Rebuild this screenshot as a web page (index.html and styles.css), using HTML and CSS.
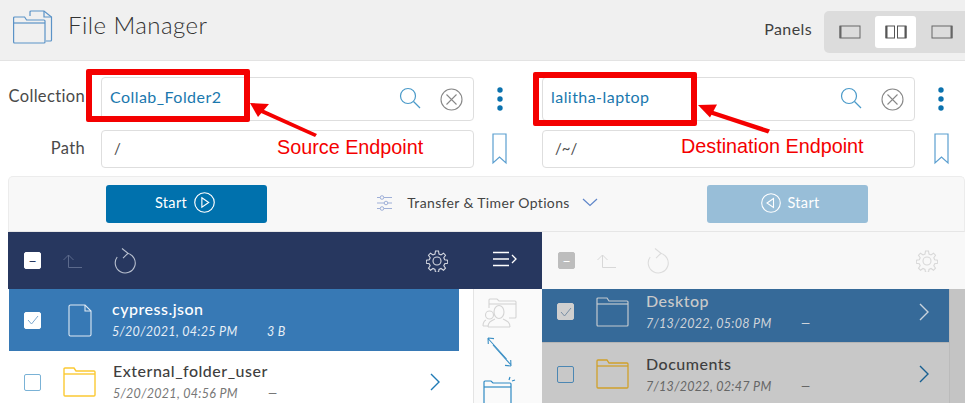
FILE: index.html
```html
<!DOCTYPE html>
<html lang="en">
<head>
    <meta charset="UTF-8">
    <title>File Manager</title>
    <link rel="stylesheet" href="styles.css">
</head>
<body>
<div class="page">
    <header class="top-bar">
        <svg class="logo" width="40" height="35" viewBox="0 0 40 35" fill="none" stroke="#5b93c7" stroke-width="1.2">
            <path d="M17 6V2a1 1 0 0 1 1-1h13l7.500 6v23a1 1 0 0 1-1 1H33"/>
            <path d="M31 1v6h7.500"/>
            <path d="M.6 32V8a1 1 0 0 1 1-1h10l2 3h17.400a1 1 0 0 1 1 1v21a1 1 0 0 1-1 1H1.600a1 1 0 0 1-1-1z"/>
            <path d="M.6 13H32"/>
        </svg>
        <h1>File Manager</h1>
        <span class="panels-label">Panels</span>
        <div class="panels-switch">
            <div class="panel-opt">
                <svg width="22" height="14" viewBox="0 0 22 14" fill="none" stroke="#666"><rect x="1" y="1" width="20" height="12"/><path d="M1.500 1v12" stroke-width="2"/></svg>
            </div>
            <div class="panel-opt active">
                <svg width="22" height="14" viewBox="0 0 22 14" fill="none" stroke="#555"><rect x="1" y="1" width="8.500" height="12"/><rect x="12.500" y="1" width="8.500" height="12"/><path d="M1.500 1v12M20.500 1v12" stroke-width="2"/></svg>
            </div>
            <div class="panel-opt">
                <svg width="22" height="14" viewBox="0 0 22 14" fill="none" stroke="#666"><rect x="1" y="1" width="20" height="12"/><path d="M20.500 1v12" stroke-width="2"/></svg>
            </div>
        </div>
    </header>

    <section class="endpoints">
        <div class="endpoint">
            <label class="field-label first">Collection</label>
            <div class="input tall">
                <span class="value">Collab_Folder2</span>
                <svg class="search" width="22" height="22" viewBox="0 0 22 22" fill="none" stroke="#4a9ac9" stroke-width="1.2"><circle cx="9" cy="9" r="7.500"/><path d="M14.500 14.500l6.500 6.500"/></svg>
                <svg class="clear" width="23" height="23" viewBox="0 0 23 23" fill="none" stroke="#888" stroke-width="1.100"><circle cx="11.500" cy="11.500" r="10.500"/><path d="M6.500 6.500l10 10M16.500 6.500l-10 10"/></svg>
            </div>
            <div class="side-icon">
                <svg width="6" height="24" viewBox="0 0 6 24" fill="#0b72ae"><circle cx="3" cy="3" r="2.700"/><circle cx="3" cy="12" r="2.700"/><circle cx="3" cy="21" r="2.700"/></svg>
            </div>
            <label class="field-label">Path</label>
            <div class="input short"><span class="path">/</span></div>
            <div class="side-icon">
                <svg width="15" height="32" viewBox="0 0 15 32" fill="none" stroke="#5b9fd0" stroke-width="1.200"><path d="M1 1h13v29l-6.500-6L1 30z"/></svg>
            </div>
        </div>
        <div class="endpoint right">
            <div class="input tall">
                <span class="value">lalitha-laptop</span>
                <svg class="search" width="22" height="22" viewBox="0 0 22 22" fill="none" stroke="#4a9ac9" stroke-width="1.2"><circle cx="9" cy="9" r="7.500"/><path d="M14.500 14.500l6.500 6.500"/></svg>
                <svg class="clear" width="23" height="23" viewBox="0 0 23 23" fill="none" stroke="#888" stroke-width="1.100"><circle cx="11.500" cy="11.500" r="10.500"/><path d="M6.500 6.500l10 10M16.500 6.500l-10 10"/></svg>
            </div>
            <div class="side-icon">
                <svg width="6" height="24" viewBox="0 0 6 24" fill="#0b72ae"><circle cx="3" cy="3" r="2.700"/><circle cx="3" cy="12" r="2.700"/><circle cx="3" cy="21" r="2.700"/></svg>
            </div>
            <div class="input short"><span class="path">/~/</span></div>
            <div class="side-icon">
                <svg width="15" height="32" viewBox="0 0 15 32" fill="none" stroke="#5b9fd0" stroke-width="1.200"><path d="M1 1h13v29l-6.500-6L1 30z"/></svg>
            </div>
        </div>
    </section>

    <section class="actions">
        <button class="start go">Start
            <svg width="21" height="21" viewBox="0 0 20 20" fill="none" stroke="#fff" stroke-width="1.100"><circle cx="10" cy="10" r="9.300"/><path d="M7.500 5.500l6.500 4.500-6.500 4.500z"/></svg>
        </button>
        <div class="options">
            <svg width="15" height="16" viewBox="0 0 15 16" fill="none" stroke="#9fb0d8"><path d="M0 2.500h15M0 8h15M0 13.500h15"/><circle cx="5" cy="2.500" r="1.800" fill="#f8f8f8"/><circle cx="9" cy="8" r="1.800" fill="#f8f8f8"/><circle cx="5" cy="13.500" r="1.800" fill="#f8f8f8"/></svg>
            <span>Transfer &amp; Timer Options</span>
            <svg width="16" height="9" viewBox="0 0 16 9" fill="none" stroke="#5f86c9" stroke-width="1.200"><path d="M1 1l7 6.500L15 1"/></svg>
        </div>
        <button class="start off">
            <svg width="20" height="20" viewBox="0 0 20 20" fill="none" stroke="#fff" stroke-width="1.100"><circle cx="10" cy="10" r="9.300"/><path d="M12.500 5.500L6 10l6.500 4.500z"/></svg>
            Start
        </button>
    </section>

    <section class="browser">
        <div class="pane left">
            <div class="pane-tools dark">
                <span class="box minus">&minus;</span>
                <svg class="up" width="19" height="14" viewBox="0 0 19 14" fill="none" stroke="#5c6a8c"><path d="M19 13.500H5.500V1M.5 6l5-5 5 5"/></svg>
                <svg class="refresh" width="22" height="26" viewBox="0 0 22 26" fill="none" stroke="#b9c0cf" stroke-width="1.100"><path d="M13.500 5.200A10 10 0 1 1 3.200 9"/><path d="M8 .5l6 4.700-5 5"/></svg>
                <svg class="gear" width="22" height="22" viewBox="0 0 22 22" fill="none" stroke="#d6d9e2" stroke-width="1.100"><circle cx="11" cy="11" r="4"/><path d="M9.500 1h3l.5 3 2 .9 2.500-1.700 2 2-1.700 2.500.9 2 3 .5v3l-3 .5-.9 2 1.700 2.500-2 2-2.500-1.700-2 .9-.5 3h-3l-.5-3-2-.9-2.500 1.700-2-2 1.700-2.500-.9-2-3-.5v-3l3-.5.9-2-1.700-2.500 2-2 2.500 1.700 2-.9z"/></svg>
            </div>
            <ul class="rows">
                <li class="row selected">
                    <span class="box checked"><svg width="12" height="10" viewBox="0 0 12 10" fill="none" stroke="#7ba7cf"><path d="M1 5l3.500 4L11 1"/></svg></span>
                    <svg class="file-icon doc" width="24" height="33" viewBox="0 0 24 33" fill="none" stroke="#dfe9f3" stroke-width="1.100"><path d="M2.500 1H17l6 6v23.500a1.500 1.500 0 0 1-1.500 1.500h-19A1.500 1.500 0 0 1 1 30.500v-28A1.500 1.500 0 0 1 2.500 1z"/><path d="M17 1v6h6"/></svg>
                    <div class="row-text">
                        <div class="name">cypress.json</div>
                        <div class="meta"><span class="date">5/20/2021, 04:25 PM</span><span>3 B</span></div>
                    </div>
                </li>
                <li class="row">
                    <span class="box"></span>
                    <svg class="file-icon" width="33" height="30" viewBox="0 0 33 30" fill="none" stroke="#fbc933" stroke-width="1.400"><path d="M1 28V2a1 1 0 0 1 1-1h9l2 3h18a1 1 0 0 1 1 1v23a1 1 0 0 1-1 1H2a1 1 0 0 1-1-1z"/><path d="M1 7h31"/></svg>
                    <div class="row-text">
                        <div class="name">External_folder_user</div>
                        <div class="meta"><span class="date">5/20/2021, 04:56 PM</span><span>&mdash;</span></div>
                    </div>
                    <svg class="chev" width="10" height="18" viewBox="0 0 10 18" fill="none" stroke="#1f7ab5" stroke-width="1.400"><path d="M1 1l8 8-8 8"/></svg>
                </li>
            </ul>
            <div class="middle">
                <svg width="35" height="30" viewBox="0 0 35 30" fill="none" stroke="#d4d4d4" stroke-width="1.100"><path d="M7 10V2a1 1 0 0 1 1-1h7l2 2h16a1 1 0 0 1 1 1v15a1 1 0 0 1-1 1h-6"/><path d="M7 6h27"/><ellipse cx="17" cy="14" rx="5" ry="6.500"/><path d="M6 29c0-5 3-6 7-8M28 29c0-5-3-6-7-8M6 29h22"/><circle cx="7.500" cy="17" r="4"/><path d="M1 28c0-4 1-5 3-6M1 28h5"/></svg>
                <svg class="arrows" width="25" height="30" viewBox="0 0 25 30" fill="none" stroke="#3b8fc4" stroke-width="1.100"><path d="M1.500 2l18 20M1 1l.3 6M1 1l6 .6"/><path d="M6 8l18 20M24 29l-.3-6M24 29l-6-.6"/></svg>
                <svg class="new-folder" width="33" height="30" viewBox="0 0 33 30" fill="none" stroke="#2f8ac4" stroke-width="1.200"><path d="M1 30V6a1 1 0 0 1 1-1h6l2 2h17a1 1 0 0 1 1 1v22"/><path d="M1 11h27"/><path d="M27 1l-1 3M32 4l-3 1"/></svg>
            </div>
        </div>
        <div class="pane dest">
            <div class="pane-tools light">
                <span class="box minus grey">&minus;</span>
                <svg class="up" width="19" height="14" viewBox="0 0 19 14" fill="none" stroke="#d8d8d8"><path d="M19 13.500H5.500V1M.5 6l5-5 5 5"/></svg>
                <svg class="refresh" width="22" height="26" viewBox="0 0 22 26" fill="none" stroke="#dcdcdc" stroke-width="1.100"><path d="M13.500 5.200A10 10 0 1 1 3.200 9"/><path d="M8 .5l6 4.700-5 5"/></svg>
                <svg class="gear" width="22" height="22" viewBox="0 0 22 22" fill="none" stroke="#d8d8d8" stroke-width="1.100"><circle cx="11" cy="11" r="4"/><path d="M9.500 1h3l.5 3 2 .9 2.500-1.700 2 2-1.700 2.500.9 2 3 .5v3l-3 .5-.9 2 1.700 2.500-2 2-2.500-1.700-2 .9-.5 3h-3l-.5-3-2-.9-2.500 1.700-2-2 1.700-2.500-.9-2-3-.5v-3l3-.5.9-2-1.700-2.500 2-2 2.500 1.700 2-.9z"/></svg>
            </div>
            <ul class="rows grey-rows">
                <li class="row selected">
                    <span class="box checked dim"><svg width="12" height="10" viewBox="0 0 12 10" fill="none" stroke="#7a8fa5"><path d="M1 5l3.500 4L11 1"/></svg></span>
                    <svg class="file-icon" width="33" height="30" viewBox="0 0 33 30" fill="none" stroke="#c3c9cf" stroke-width="1.200"><path d="M1 28V2a1 1 0 0 1 1-1h9l2 3h18a1 1 0 0 1 1 1v23a1 1 0 0 1-1 1H2a1 1 0 0 1-1-1z"/><path d="M1 7h31"/></svg>
                    <div class="row-text">
                        <div class="name">Desktop</div>
                        <div class="meta"><span class="date">7/13/2022, 05:08 PM</span><span>&mdash;</span></div>
                    </div>
                    <svg class="chev" width="10" height="18" viewBox="0 0 10 18" fill="none" stroke="#c9d3dd" stroke-width="1.400"><path d="M1 1l8 8-8 8"/></svg>
                </li>
                <li class="row">
                    <span class="box"></span>
                    <svg class="file-icon" width="33" height="30" viewBox="0 0 33 30" fill="none" stroke="#d0a02a" stroke-width="1.300"><path d="M1 28V2a1 1 0 0 1 1-1h9l2 3h18a1 1 0 0 1 1 1v23a1 1 0 0 1-1 1H2a1 1 0 0 1-1-1z"/><path d="M1 7h31"/></svg>
                    <div class="row-text">
                        <div class="name">Documents</div>
                        <div class="meta"><span class="date">7/13/2022, 02:47 PM</span><span>&mdash;</span></div>
                    </div>
                    <svg class="chev" width="10" height="18" viewBox="0 0 10 18" fill="none" stroke="#165f91" stroke-width="1.400"><path d="M1 1l8 8-8 8"/></svg>
                </li>
            </ul>
            <svg class="collapse" width="24" height="16" viewBox="0 0 24 16" fill="none" stroke="#fff" stroke-width="1.300"><path d="M0 1.500h16M0 8h16M0 14.500h16M19 4l4 4-4 4"/></svg>
        </div>
    </section>

    <!-- red notes drawn over the screenshot -->
    <div class="mark mark-source"></div>
    <div class="mark mark-dest"></div>
    <span class="note note-source">Source Endpoint</span>
    <span class="note note-dest">Destination Endpoint</span>
    <svg class="arrow arrow-source" width="70" height="40" viewBox="0 0 70 40" fill="#f40000"><path d="M65 36L10 11.500l2-3.500 55 25z"/><path d="M0 2l19 1-11 13z"/></svg>
    <svg class="arrow arrow-dest" width="75" height="32" viewBox="0 0 75 32" fill="#f40000"><path d="M70 30.500L11 11l1.500-4L72 26.500z"/><path d="M0 2l19-.5-7 13z"/></svg>
</div>
</body>
</html>
```

FILE: styles.css
```css
* {
    box-sizing: border-box;
}
html, body {
    margin: 0;
    background: #ffffff;
}
.page {
    position: relative;
    width: 965px;
    height: 403px;
    overflow: hidden;
    font-family: "Lato", "Open Sans", sans-serif;
    color: #3f3f3f;
}

/* header */
.top-bar {
    display: flex;
    align-items: center;
    height: 61px;
    padding-left: 13px;
    background-color: #f0f0f0;
    border-bottom: 1px solid #e3e3e3;
}
.logo {
    margin-top: -6px;
}
.top-bar h1 {
    margin: -11px 0 0 15px;
    font-size: 24px;
    font-weight: 300;
    letter-spacing: 0.45px;
    color: #333333;
}
.panels-label {
    margin: -4px 12px 0 auto;
    font-size: 16px;
    letter-spacing: 0.4px;
}
.panels-switch {
    display: flex;
    gap: 5px;
    width: 141px;
    height: 42px;
    margin-top: 3px;
    padding: 5px 0 5px 5px;
    background-color: #dcdcdc;
    border-radius: 5px 0 0 5px;
}
.panel-opt {
    display: flex;
    align-items: center;
    justify-content: center;
    width: 41px;
    border-radius: 3px;
}
.panel-opt.active {
    background-color: #ffffff;
}

/* collection and path inputs */
.endpoints {
    display: flex;
    height: 115px;
    padding-top: 16px;
}
.endpoint {
    display: grid;
    grid-template-columns: 85px 16px 373px 51px;
    grid-template-rows: 44px 38px;
    row-gap: 9px;
    width: 542px;
}
.endpoint .field-label {
    grid-column: 1;
}
.endpoint .input {
    grid-column: 3;
}
.endpoint .side-icon {
    grid-column: 4;
}
.endpoint.right {
    width: 423px;
    grid-template-columns: 373px 52px;
}
.endpoint.right .input {
    grid-column: 1;
}
.endpoint.right .side-icon {
    grid-column: 2;
}
.field-label {
    align-self: center;
    margin-top: -2px;
    font-size: 16.5px;
    text-align: right;
    letter-spacing: 0.35px;
    color: #4a4a4a;
}
.field-label.first {
    margin-top: -6px;
}
.input {
    display: flex;
    align-items: center;
    border: 1px solid #dedede;
    border-radius: 4px;
    background-color: #ffffff;
}
.value {
    margin: -6px auto 0 8px;
    font-size: 16px;
    letter-spacing: 0.45px;
    color: #1a78ae;
}
.path {
    margin: -2px 0 0 12px;
    font-size: 15px;
    color: #4a4a4a;
}
.search {
    margin: -3px 19px 0 0;
}
.clear {
    margin-right: 10px;
}
.side-icon {
    display: flex;
    align-items: center;
    justify-content: center;
}

/* start buttons row */
.actions {
    display: grid;
    grid-template-columns: 161px 1fr 161px;
    align-items: center;
    height: 56px;
    margin-left: 8px;
    padding: 0 96px 0 97px;
    background-color: #f8f8f8;
    border: 1px solid #ececec;
    border-bottom: 1px solid #e6e6e6;
    border-radius: 5px 5px 0 0;
}
.start {
    display: flex;
    align-items: center;
    justify-content: center;
    gap: 7px;
    height: 38px;
    padding: 0 3px 3px 0;
    border: none;
    border-radius: 3px;
    background-color: #0071ad;
    color: #ffffff;
    font-family: inherit;
    font-size: 14.500px;
    letter-spacing: 0.3px;
}
.start.off {
    padding: 0 0 3px 5px;
    background-color: #98bed8;
}
.options {
    display: flex;
    align-items: center;
    justify-content: center;
    gap: 15px;
    padding: 0 0 3px 1px;
    font-size: 14px;
    letter-spacing: 0.35px;
    color: #444444;
}
.options span {
    margin-right: -3px;
}

/* file lists */
.browser {
    display: flex;
    height: 171px;
    margin-left: 8px;
}
.pane {
    position: relative;
    display: grid;
    grid-template-rows: 57px 1fr;
    overflow: hidden;
}
.pane.left {
    grid-template-columns: 451px 83px;
    width: 534px;
}
.pane.dest {
    flex: 1;
    overflow: visible;
}
.pane-tools {
    display: flex;
    align-items: center;
    padding-left: 16px;
}
.pane.left .pane-tools {
    grid-column: 1 / 3;
}
.pane-tools.dark {
    background-color: #27375f;
}
.pane-tools.light {
    background-color: #f8f8f8;
}
.up {
    margin: 1px 0 0 22px;
}
.refresh {
    margin: 0 0 0 32px;
}
.gear {
    margin-left: 290px;
}
.pane-tools.light .gear {
    margin-left: 247px;
}
.pane-tools.light .refresh {
    margin-left: 31px;
}
.box {
    display: flex;
    align-items: center;
    justify-content: center;
    flex: none;
    width: 17px;
    height: 17px;
    border: 1px solid #7ab2d6;
    border-radius: 2px;
    background-color: #ffffff;
}
.box.minus {
    border-color: #ffffff;
    color: #27375f;
    font-size: 14px;
    line-height: 1;
}
.box.minus.grey {
    border-color: #bdbdbd;
    background-color: #bdbdbd;
    color: #ffffff;
}
.box.checked {
    border-color: #ffffff;
}
.rows {
    list-style: none;
    margin: 0;
    padding: 0;
    overflow: hidden;
}
.row {
    display: flex;
    align-items: center;
    height: 62px;
    padding-left: 16px;
}
.row.selected {
    margin-left: 1px;
    padding-left: 15px;
    background-color: #3779b5;
    color: #ffffff;
}
.file-icon {
    flex: none;
    margin-left: 22px;
}
.row.selected .file-icon.doc {
    margin-left: 27px;
    margin-right: 3px;
}
.row-text {
    margin-left: 17px;
    margin-top: -4px;
}
.row.selected .row-text {
    margin-left: 17px;
}
.name {
    font-size: 16px;
    font-weight: 500;
    letter-spacing: 0.5px;
    line-height: 22px;
}
.meta {
    display: flex;
    margin-top: 4px;
    font-size: 12.500px;
    font-style: italic;
    letter-spacing: 0.3px;
    color: #777777;
}
.row.selected .meta {
    color: #e6eef6;
}
.date {
    width: 155px;
}
.chev {
    flex: none;
    margin-left: auto;
    margin-right: 19px;
}
.middle {
    display: flex;
    flex-direction: column;
    align-items: center;
    gap: 9px;
    width: 69px;
    margin-left: 14px;
    padding: 9px 17px 0 0;
    background: #fafafa;
    border-left: 1px solid #e4e4e4;
}

/* right pane is greyed out and scrolled a bit */
.grey-rows {
    padding-right: 15px;
    background-color: #c4c4c4;
}
.grey-rows .row {
    padding-left: 15px;
    background-color: #c8c8c8;
    border-right: 1px solid #bbbbbb;
}
.grey-rows .row.selected {
    margin: -8px 0 0 0;
    padding-left: 15px;
    background-color: #366a99;
    color: #c9c9c9;
    border-bottom: 1px solid #b5b5b5;
}
.grey-rows .row-text,
.grey-rows .row.selected .row-text {
    margin-left: 17px;
    margin-top: -2px;
}
.grey-rows .row.selected .meta {
    color: #cfd4da;
}
.grey-rows .meta {
    color: #666666;
}
.grey-rows .box {
    background-color: transparent;
    border-color: #4c87b3;
}
.grey-rows .box.checked.dim {
    background-color: #cfcfcf;
    border-color: #cfcfcf;
}
.grey-rows .chev {
    margin-right: 20px;
}

/* overlays */
.collapse {
    position: absolute;
    top: 19px;
    left: -49px;
}
.mark {
    position: absolute;
    border: 6px solid #f40000;
    border-radius: 2px;
}
.mark-source {
    left: 86px;
    top: 69px;
    width: 164px;
    height: 53px;
}
.mark-dest {
    left: 533px;
    top: 72px;
    width: 164px;
    height: 54px;
}
.note {
    position: absolute;
    font-family: "Liberation Sans", Arial, sans-serif;
    font-size: 19.800px;
    color: #f40000;
    white-space: nowrap;
}
.note-source {
    left: 277px;
    top: 136px;
}
.note-dest {
    left: 681px;
    top: 135px;
}
.arrow {
    position: absolute;
}
.arrow-source {
    left: 250px;
    top: 101px;
}
.arrow-dest {
    left: 698px;
    top: 103px;
}
```
